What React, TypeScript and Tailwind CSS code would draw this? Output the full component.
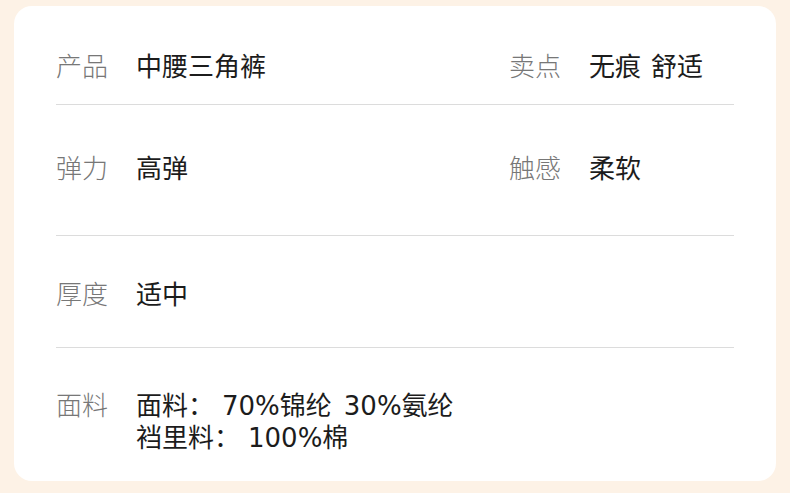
import React from "react";

const font = { fontFamily: '"DejaVu Sans", "Noto Sans CJK SC", sans-serif' };

function Label({ children }: { children: React.ReactNode }) {
  return <span className="w-[80px] shrink-0 text-[#777777] font-light">{children}</span>;
}
function Value({ children }: { children: React.ReactNode }) {
  return <span className="text-[#1c1c1c]">{children}</span>;
}

export default function App() {
  return (
    <div className="w-[790px] h-[493px] bg-[#fdf2e6] pt-[6px] pl-[14px]" style={font}>
      <div className="w-[762px] h-[475px] bg-white rounded-[18px] px-[42px] text-[26px] leading-[32px]">
        <div className="flex pt-[45px] pb-[21px] border-b border-[#dcdcdc]">
          <div className="flex w-[453px]">
            <Label>产品</Label>
            <Value>中腰三角裤</Value>
          </div>
          <div className="flex">
            <Label>卖点</Label>
            <Value>
              无痕<span className="ml-[10px]">舒适</span>
            </Value>
          </div>
        </div>
        <div className="flex pt-[48px] pb-[50px] border-b border-[#dcdcdc]">
          <div className="flex w-[453px]">
            <Label>弹力</Label>
            <Value>高弹</Value>
          </div>
          <div className="flex">
            <Label>触感</Label>
            <Value>柔软</Value>
          </div>
        </div>
        <div className="flex pt-[43px] pb-[36px] border-b border-[#dcdcdc]">
          <Label>厚度</Label>
          <Value>适中</Value>
        </div>
        <div className="flex pt-[42px]">
          <Label>面料</Label>
          <div className="flex flex-col text-[#1c1c1c]">
            <span>
              面料：<span className="ml-[8px]">70%锦纶</span>
              <span className="ml-[12px]">30%氨纶</span>
            </span>
            <span>
              裆里料：<span className="ml-[8px]">100%棉</span>
            </span>
          </div>
        </div>
      </div>
    </div>
  );
}
